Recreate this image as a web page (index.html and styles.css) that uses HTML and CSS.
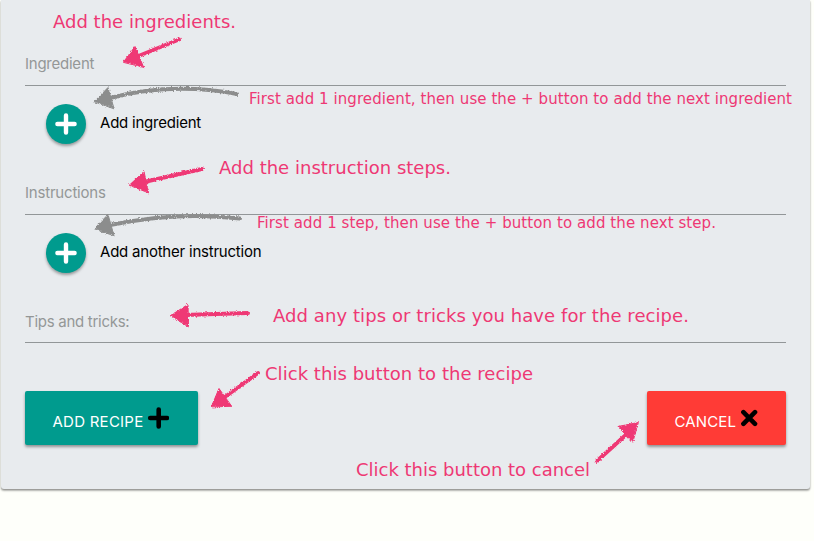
FILE: index.html
```html
<!DOCTYPE html>
<html lang="en">
<head>
<meta charset="utf-8">
<title>Add recipe</title>
<link rel="stylesheet" href="styles.css">
</head>
<body>
<main class="card">
  <div class="field first"><label class="w-ingredient">Ingredient</label></div>
  <div class="add-row">
    <button class="fab" aria-label="Add ingredient"><svg width="22" height="22" viewBox="0 0 22 22"><path d="M11 2.4V19.6M2.4 11H19.6"/></svg></button>
    <span class="add-text">Add ingredient</span>
  </div>
  <div class="field"><label class="w-instructions">Instructions</label></div>
  <div class="add-row">
    <button class="fab" aria-label="Add instruction"><svg width="22" height="22" viewBox="0 0 22 22"><path d="M11 2.4V19.6M2.4 11H19.6"/></svg></button>
    <span class="add-text">Add another instruction</span>
  </div>
  <div class="field last"><label class="w-tips">Tips and tricks:</label></div>
  <div class="actions">
    <button class="btn submit"><span>ADD RECIPE</span><svg width="22" height="22" viewBox="0 0 22 22"><path d="M11.700 2.500V19.500M3.200 11H20"/></svg></button>
    <button class="btn cancel"><span>CANCEL</span><svg width="18" height="18" viewBox="0 0 18 18"><path d="M3.400 3.200L15 14.800M15 3.200L3.400 14.800"/></svg></button>
  </div>
</main>
<svg class="notes" width="814" height="541" viewBox="0 0 814 541">
  <defs>
    <filter id="chalk" x="-10%" y="-30%" width="120%" height="160%">
      <feTurbulence type="fractalNoise" baseFrequency="0.6" numOctaves="2" seed="4"/>
      <feDisplacementMap in="SourceGraphic" scale="3.2" xChannelSelector="R" yChannelSelector="G"/>
    </filter>
  </defs>
  <g class="arrows pink" filter="url(#chalk)">
    <path class="shaft" d="M179 39.500L136 57"/><path class="head" d="M123.500 62L135 46.500L143.500 67Z"/>
    <path class="shaft" d="M202 169L144 182"/><path class="head" d="M129.500 185L144 171.500L148.500 192.500Z"/>
    <path class="shaft" d="M248 313L184 315"/><path class="head" d="M170.500 315.500L188 304.500L188.500 326.500Z"/>
    <path class="shaft" d="M258 373L222 399"/><path class="head" d="M211.500 406.500L219 388.500L231.500 406Z"/>
    <path class="shaft" d="M597 461L628 433"/><path class="head" d="M638 422.500L618 426.500L632.500 442Z"/>
  </g>
  <g class="arrows gray" filter="url(#chalk)">
    <path class="shaft" d="M237 94Q172 82 110 98"/><path class="head" d="M94.500 101.500L108 87.500L114 108.500Z"/>
    <path class="shaft" d="M240 218.500Q178 211 110 225"/><path class="head" d="M94.500 228.500L108 214.500L114 235.500Z"/>
  </g>
  <g class="big">
    <text x="53" y="28" textLength="183">Add the ingredients.</text>
    <text x="219" y="174" textLength="232">Add the instruction steps.</text>
    <text x="273" y="322" textLength="416">Add any tips or tricks you have for the recipe.</text>
    <text x="265" y="380" textLength="268">Click this button to the recipe</text>
    <text x="356" y="476" textLength="234">Click this button to cancel</text>
  </g>
  <g class="small">
    <text x="249" y="104" textLength="543">First add 1 ingredient, then use the + button to add the next ingredient</text>
    <text x="257" y="228" textLength="459">First add 1 step, then use the + button to add the next step.</text>
  </g>
</svg>
</body>
</html>
```
FILE: styles.css
```css
* { box-sizing: border-box; }
body {
  margin: 0;
  height: 541px;
  overflow: hidden;
  background: #fefffa;
  font-family: Inter, "Liberation Sans", sans-serif;
  font-size: 15px;
  color: #000;
}
.card {
  width: 809px;
  height: 489px;
  margin-left: 1px;
  padding: 0 24px;
  background: #e8ebee;
  border-radius: 0 0 3px 3px;
  box-shadow: 0 2px 2px rgba(0,0,0,.22), 0 1px 2px rgba(0,0,0,.3);
}
.field {
  height: 71px;
  display: flex;
  align-items: flex-end;
  padding-bottom: 12px;
  border-bottom: 1px solid #929698;
}
.field.first { height: 86px; }
.field.last { height: 70px; padding-bottom: 11px; }
label { color: #949797; line-height: 18px; white-space: nowrap; }
.w-ingredient { letter-spacing: -.24px; }
.w-instructions { letter-spacing: -.2px; }
.w-tips { letter-spacing: -.28px; }
.add-row {
  display: flex;
  align-items: center;
  gap: 14px;
  height: 40px;
  margin: 18px 0 0 21px;
}
.add-text { letter-spacing: -.22px; line-height: 18px; margin-top: -3px; }
button { border: 0; font: inherit; padding: 0; }
svg path { stroke-linecap: round; fill: none; }
.fab {
  width: 40px;
  height: 40px;
  display: flex;
  align-items: center;
  justify-content: center;
  border-radius: 50%;
  background: #009b8e;
  box-shadow: 0 2px 3px rgba(0,0,0,.35);
}
.fab path { stroke: #fff; stroke-width: 4.400; }
.actions {
  display: flex;
  justify-content: space-between;
  margin-top: 48px;
}
.btn {
  height: 54px;
  display: flex;
  align-items: center;
  padding: 0 27.500px;
  border-radius: 2px;
  color: #fff;
  text-align: left;
  box-shadow: 0 2px 3px rgba(0,0,0,.38);
}
.btn span { line-height: 18px; margin-top: 7px; white-space: nowrap; }
.btn path { stroke: #000; stroke-width: 4.600; }
.submit { width: 173px; background: #009b8e; }
.submit span { width: 94px; letter-spacing: .25px; }
.submit svg { flex: none; }
.cancel { width: 139px; background: #ff3b36; }
.cancel span { width: 65px; letter-spacing: .12px; }
.cancel svg { flex: none; }
.notes { position: absolute; left: 0; top: 0; pointer-events: none; }
.notes text { font-family: "DejaVu Sans", Verdana, sans-serif; fill: #ee3874; }
.big { font-size: 18px; }
.small { font-size: 15px; }
.arrows .shaft { stroke-width: 4; }
.arrows .head { stroke-width: 1; stroke-linejoin: round; }
.pink path { stroke: #ef3774; }
.pink .head { fill: #ef3774; }
.gray path { stroke: #8c8d8d; }
.gray .head { fill: #8c8d8d; }
```
